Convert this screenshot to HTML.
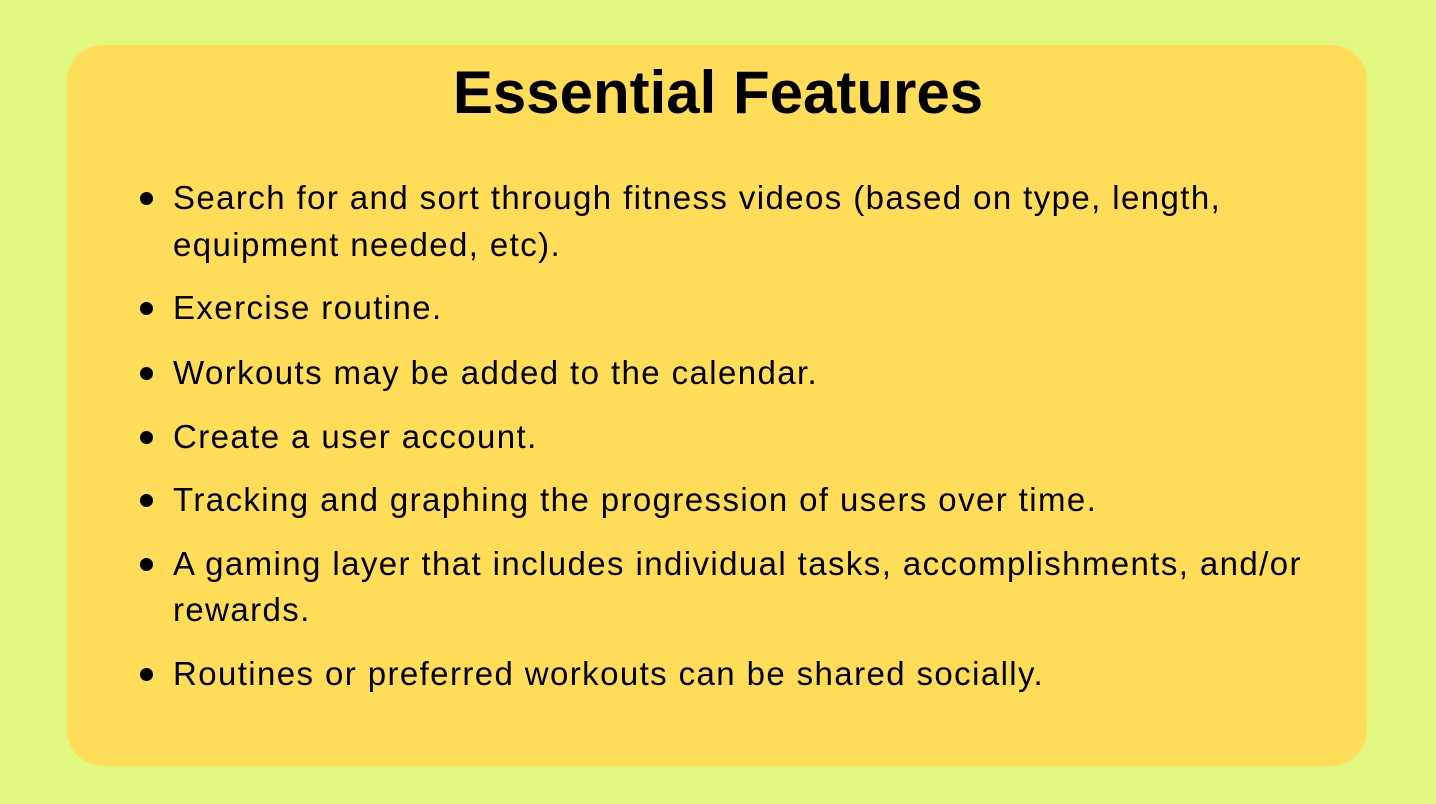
<!DOCTYPE html>
<html><head><style>
html,body{margin:0;padding:0;}
body{width:1436px;height:804px;background:#e1f77f;position:relative;overflow:hidden;font-family:"Liberation Sans",sans-serif;}
.card{position:absolute;left:67px;top:45px;width:1300px;height:721px;background:#ffdd58;border-radius:36px;}
h1{position:absolute;left:0;width:1436px;top:57px;margin:0;text-align:center;font-size:60px;font-weight:bold;color:#000;line-height:72px;}
.l{position:absolute;left:173px;font-size:33px;letter-spacing:1.4px;line-height:40px;color:#000;white-space:nowrap;}
.b{position:absolute;left:140px;width:13px;height:13px;border-radius:50%;background:#000;}
</style></head><body>
<div class="card"></div>
<h1>Essential Features</h1>
<div class="b" style="top:192px"></div><div class="l" style="top:178px">Search for and sort through fitness videos (based on type, length,</div>
<div class="l" style="top:225px">equipment needed, etc).</div>
<div class="b" style="top:302px"></div><div class="l" style="top:288px">Exercise routine.</div>
<div class="b" style="top:367px"></div><div class="l" style="top:353px">Workouts may be added to the calendar.</div>
<div class="b" style="top:431px"></div><div class="l" style="top:417px">Create a user account.</div>
<div class="b" style="top:494px"></div><div class="l" style="top:480px">Tracking and graphing the progression of users over time.</div>
<div class="b" style="top:558px"></div><div class="l" style="top:544px">A gaming layer that includes individual tasks, accomplishments, and/or</div>
<div class="l" style="top:590px">rewards.</div>
<div class="b" style="top:668px"></div><div class="l" style="top:654px">Routines or preferred workouts can be shared socially.</div>
</body></html>
